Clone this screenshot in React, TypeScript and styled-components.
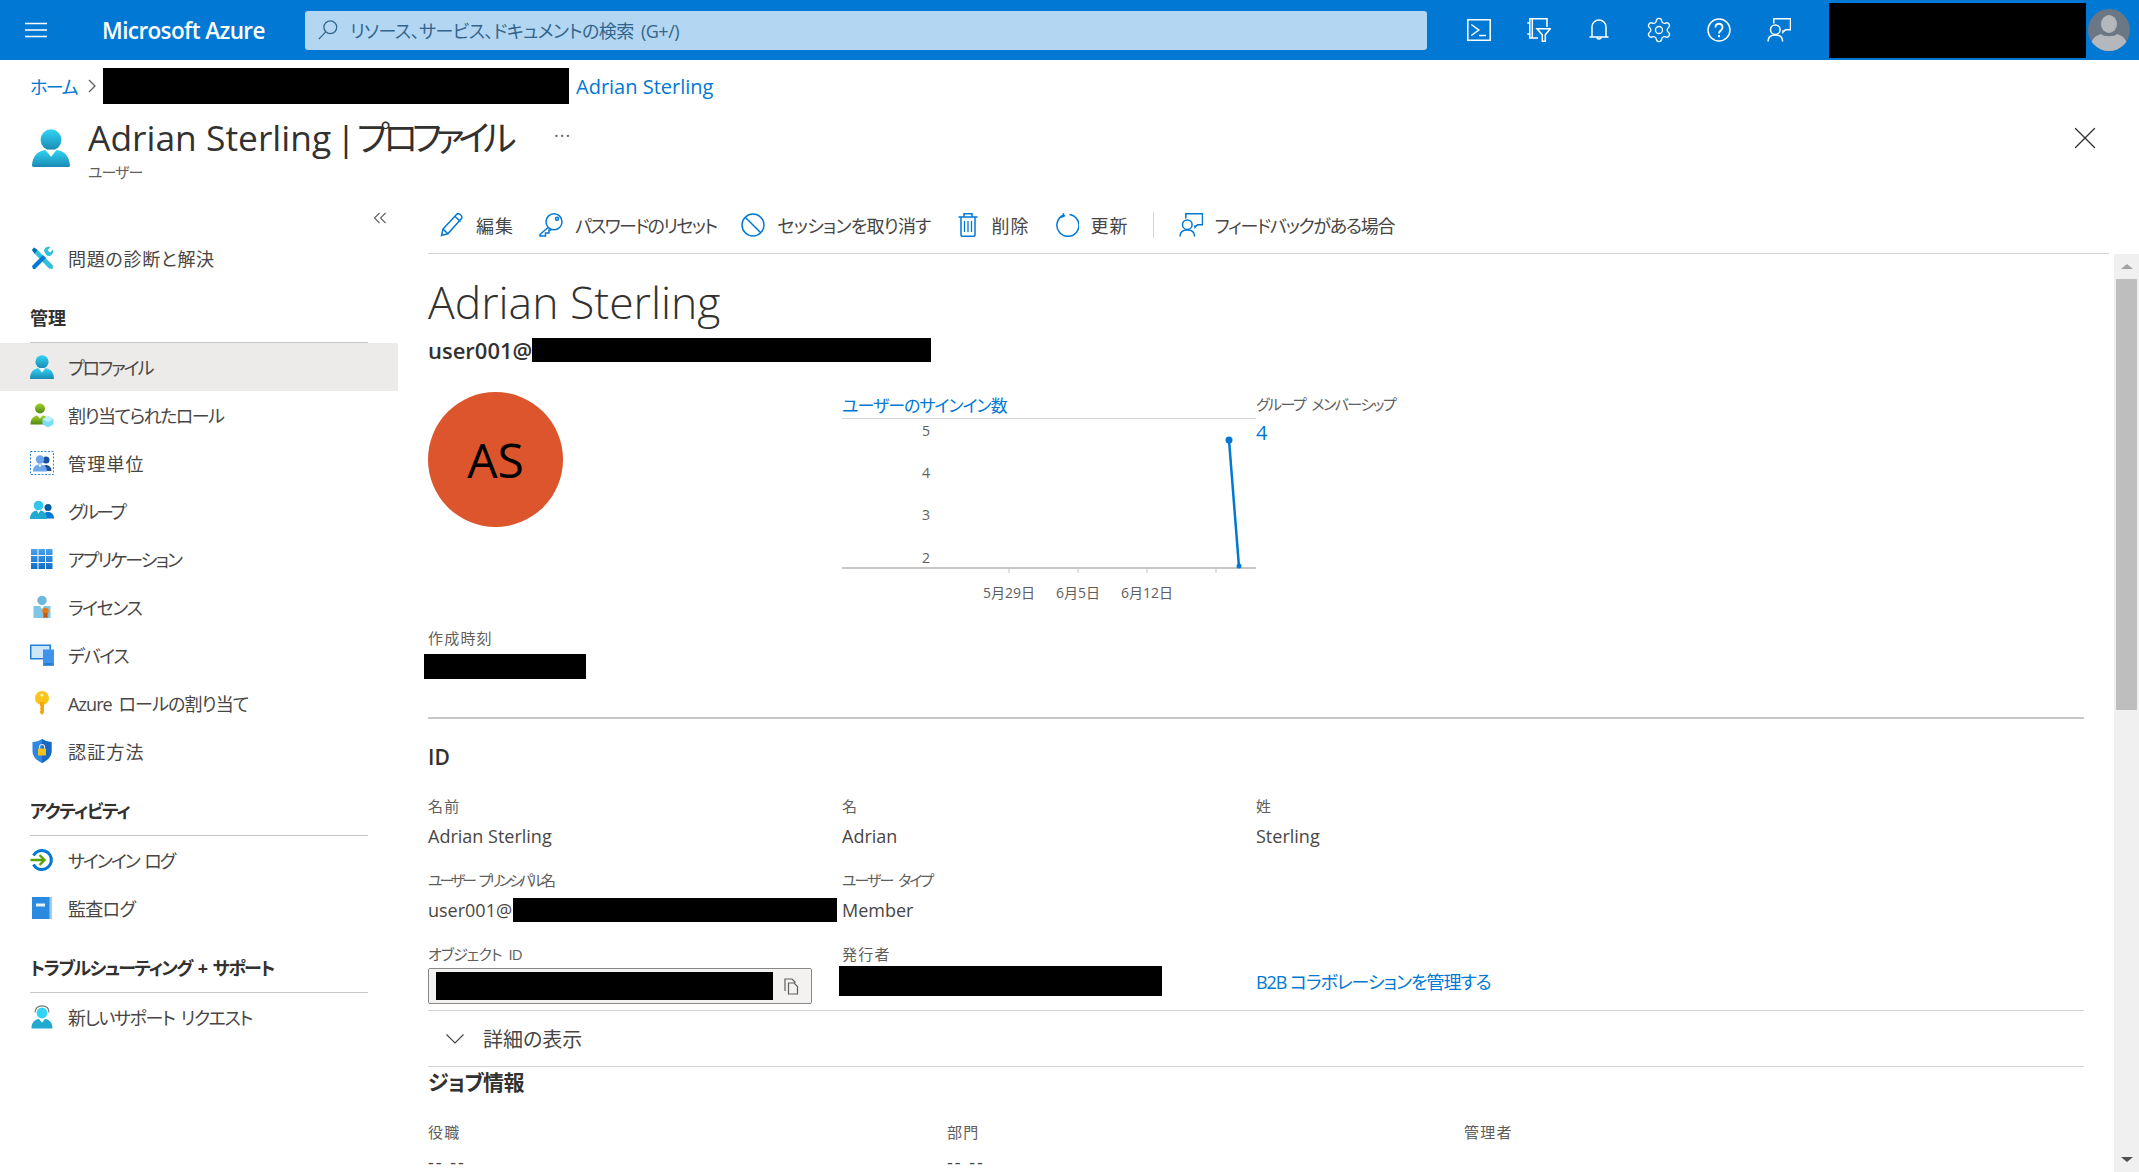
import { FC, ReactNode } from "react";
import styled, { createGlobalStyle } from "styled-components";
import { Settings, X } from "lucide-react";

const FONT = `"Open Sans", "Noto Sans CJK JP", sans-serif`;

const Global = createGlobalStyle`
  html, body { margin: 0; padding: 0; background: #fff; }
  body {
    font-family: ${FONT};
    font-feature-settings: "palt";
    color: #484644;
    font-size: 18px;
  }
  * { box-sizing: border-box; }
`;

const Page = styled.div`
  width: 2139px;
  height: 1172px;
  display: flex;
  flex-direction: column;
  overflow: hidden;
`;

// kana in the original font runs narrower than Noto, so labels carry their own tracking
const Txt = styled.span<{ $ls?: number }>`
  letter-spacing: ${(p) => p.$ls ?? 0}px;
  word-spacing: 3px;
  white-space: pre;
`;

const Redact = styled.div<{ $w: number; $h: number; $ml?: number; $mt?: number }>`
  flex: none;
  width: ${(p) => p.$w}px;
  height: ${(p) => p.$h}px;
  margin-left: ${(p) => p.$ml ?? 0}px;
  margin-top: ${(p) => p.$mt ?? 0}px;
  background: #000;
`;

/* top bar */
const TopBar = styled.header`
  flex: none;
  height: 60px;
  display: flex;
  align-items: center;
  padding-left: 25px;
  background: #0078d4;
  color: #fff;
`;

const Brand = styled.div`
  width: 162px;
  margin-left: 55px;
  margin-right: 1px;
  font-size: 22.5px;
  font-weight: 600;
  letter-spacing: -0.6px;
  white-space: nowrap;
`;

const Search = styled.div`
  width: 1122px;
  height: 39px;
  margin-left: 40px;
  display: flex;
  align-items: center;
  gap: 11px;
  padding-left: 12px;
  border-radius: 3px;
  background: #b3d7f2;
  color: #33658c;
  font-size: 18px;
`;

const BarIcons = styled.div`
  display: flex;
  margin-left: 22px;
  margin-right: 20px;
`;

const BarIcon = styled.div`
  width: 60px;
  height: 60px;
  display: flex;
  align-items: center;
  justify-content: center;
`;

const AvatarSlot = styled.div`
  margin-left: 2px;
  display: flex;
`;

/* breadcrumb + header */
const Crumbs = styled.nav`
  flex: none;
  height: 36px;
  margin-top: 8px;
  padding-left: 30px;
  display: flex;
  align-items: center;
  font-size: 18px;
  color: #0078d4;
`;

const CrumbArrow = styled.span`
  display: flex;
  margin: 0 4px 0 8px;
`;

const CrumbCurrent = styled.span`
  margin-left: 7px;
  font-size: 20px;
  white-space: nowrap;
`;

const HeaderRow = styled.div`
  flex: none;
  height: 91px;
  padding: 8px 35px 0 32px;
  display: flex;
  align-items: flex-start;
`;

const HeaderIcon = styled.div`
  width: 56px;
  padding-top: 17px;
  display: flex;
`;

const TitleBlock = styled.div`
  width: 466px;
`;

const Title = styled.h1`
  margin: 3px 0 0;
  font-size: 35.4px;
  line-height: 44px;
  font-weight: 400;
  color: #323130;
  white-space: nowrap;
`;

const TitleSep = styled.span`
  letter-spacing: -4px;
  white-space: pre;
`;

const Sub = styled.div`
  margin-top: 3px;
  font-size: 15px;
  line-height: 20px;
  letter-spacing: -1px;
  color: #605e5c;
`;

const Dots = styled.div`
  padding-top: 11px;
  font-size: 18px;
  line-height: 24px;
  color: #605e5c;
  letter-spacing: 1px;
`;

const CloseBox = styled.div`
  margin-left: auto;
  padding-top: 7px;
  display: flex;
  color: #323130;
`;

/* sidebar */
const Body = styled.div`
  flex: 1;
  min-height: 0;
  display: flex;
`;

const Sidebar = styled.aside`
  flex: none;
  width: 398px;
  display: flex;
  flex-direction: column;
`;

const CollapseRow = styled.div`
  height: 39px;
  padding: 16px 11px 0 0;
  display: flex;
  justify-content: flex-end;
  align-items: flex-start;
`;

const NavRow = styled.div<{ $active?: boolean }>`
  flex: none;
  height: 48px;
  padding-left: 30px;
  display: flex;
  align-items: center;
  gap: 14px;
  font-size: 18px;
  background: ${(p) => (p.$active ? "#edebe9" : "transparent")};
`;

const NavIcon = styled.span`
  width: 24px;
  height: 24px;
  display: flex;
`;

const NavHeading = styled.div`
  flex: none;
  height: 61px;
  width: 338px;
  margin-left: 30px;
  padding-bottom: 12px;
  display: flex;
  align-items: flex-end;
  font-size: 18px;
  line-height: 24px;
  font-weight: 700;
  color: #323130;
  border-bottom: 1px solid #c8c6c4;
`;

/* main column */
const Main = styled.main`
  flex: 1;
  min-width: 0;
  display: flex;
  flex-direction: column;
`;

const Toolbar = styled.div`
  flex: none;
  height: 59px;
  margin: 0 30px;
  padding: 1px 0 0 12px;
  display: flex;
  align-items: center;
  gap: 25px;
  border-bottom: 1px solid #d6d6d6;
`;

const ToolButton = styled.div<{ $gap?: number }>`
  display: flex;
  align-items: center;
  gap: ${(p) => p.$gap ?? 12}px;
  font-size: 18px;
  white-space: nowrap;
`;

const ToolDivider = styled.div`
  width: 1px;
  height: 26px;
  margin-left: -1px;
  background: #d6d6d6;
`;

const ContentRow = styled.div`
  flex: 1;
  min-height: 0;
  display: flex;
`;

const Scroll = styled.div`
  flex: 1;
  min-width: 0;
  overflow: hidden;
  padding: 21px 30px 0;
`;

const ScrollBar = styled.div`
  flex: none;
  width: 25px;
  display: flex;
  flex-direction: column;
  align-items: center;
  background: #f0f0f0;
`;

const ScrollBtn = styled.div<{ $down?: boolean }>`
  flex: none;
  height: 25px;
  width: 100%;
  display: flex;
  align-items: center;
  justify-content: center;
  margin-top: ${(p) => (p.$down ? "auto" : "0")};
  &::before {
    content: "";
    border-left: 6px solid transparent;
    border-right: 6px solid transparent;
    ${(p) =>
      p.$down
        ? "border-top: 5px solid #505050;"
        : "border-bottom: 5px solid #a3a3a3;"}
  }
`;

const ScrollThumb = styled.div`
  flex: none;
  width: 21px;
  height: 431px;
  background: #bebebe;
`;

const UserName = styled.h2`
  margin: -1px 0 1px;
  font-size: 44.5px;
  line-height: 56px;
  font-weight: 300;
  color: #323130;
  white-space: nowrap;
`;

const Upn = styled.div`
  margin-top: 8px;
  height: 24px;
  display: flex;
  align-items: center;
  font-size: 22px;
  font-weight: 600;
  color: #323130;
`;

const Summary = styled.div`
  margin-top: 30px;
  display: grid;
  grid-template-columns: 414px 414px 1fr;
`;

const Avatar = styled.div`
  width: 135px;
  height: 135px;
  border-radius: 50%;
  background: #dc552c;
  color: #000;
  display: flex;
  align-items: center;
  justify-content: center;
  font-size: 48px;
  font-weight: 500;
`;

const ChartTitle = styled.div`
  height: 27px;
  font-size: 17px;
  line-height: 28px;
  letter-spacing: -1px;
  color: #0078d4;
  border-bottom: 1px solid #d6d6d6;
`;

const ChartLabel = styled.text`
  font-family: ${FONT};
  font-size: 14px;
  fill: #605e5c;
`;

const FieldLabel = styled.div<{ $ls?: number }>`
  font-size: 15px;
  line-height: 24px;
  letter-spacing: ${(p) => p.$ls ?? 1.2}px;
  word-spacing: 4px;
  color: #605e5c;
  white-space: nowrap;
`;

const GroupCount = styled.div`
  margin-top: 5px;
  font-size: 20px;
  line-height: 24px;
  color: #0078d4;
`;

const Created = styled.div`
  margin-top: 16px;
`;

const SectionRule = styled.div`
  margin-top: 38px;
  height: 2px;
  background: #c8c6c4;
`;

const SectionTitle = styled.h3<{ $mt?: number; $ls?: number }>`
  margin: ${(p) => p.$mt ?? 0}px 0 0;
  font-size: 21px;
  line-height: 30px;
  font-weight: 600;
  letter-spacing: ${(p) => p.$ls ?? 0}px;
  color: #323130;
`;

const FieldGrid = styled.div`
  margin-top: 22px;
  display: grid;
  grid-template-columns: 414px 414px 1fr;
  grid-template-rows: 74px 74px 68px;
`;

const JobGrid = styled.div`
  margin-top: 23px;
  display: grid;
  grid-template-columns: 519px 517px 1fr;
`;

const Field = styled.div`
  min-width: 0;
`;

const FieldValue = styled.div<{ $ls?: number }>`
  margin-top: 6px;
  height: 24px;
  display: flex;
  align-items: center;
  font-size: 18px;
  line-height: 18px;
  letter-spacing: ${(p) => p.$ls ?? 0}px;
  white-space: nowrap;
`;

const CopyInput = styled.div`
  margin-top: 2px;
  width: 384px;
  height: 36px;
  padding-left: 7px;
  padding-right: 11px;
  display: flex;
  align-items: center;
  justify-content: space-between;
  background: #f3f2f1;
  border: 1px solid #8a8886;
  border-radius: 2px;
`;

const LinkText = styled.div`
  padding-top: 28px;
  font-size: 18px;
  line-height: 24px;
  letter-spacing: -1.05px;
  color: #0078d4;
  white-space: nowrap;
`;

const Expander = styled.div`
  height: 57px;
  padding-left: 18px;
  display: flex;
  align-items: center;
  gap: 19px;
  font-size: 20px;
  border-top: 1px solid #d6d6d6;
  border-bottom: 1px solid #d6d6d6;
`;

/* drawings */
const Person: FC<{ id: string; size?: number }> = ({ id, size = 24 }) => (
  <svg width={size} height={size} viewBox="0 0 24 24">
    <defs>
      <linearGradient id={id} x1="0" y1="0" x2="0" y2="1">
        <stop offset="0" stopColor="#32d4f5" />
        <stop offset="1" stopColor="#198ab3" />
      </linearGradient>
    </defs>
    <circle cx="12" cy="6.800" r="6.600" fill={`url(#${id})`} />
    <path
      d="M1 24c-.6 0-1-.5-1-1.100C.4 17 3.500 13.800 8.500 13.200L12 17.500l3.500-4.300c5 .6 8.100 3.800 8.500 9.700 0 .6-.4 1.100-1 1.100z"
      fill={`url(#${id})`}
    />
    <path d="M9.600 13h4.800L12 17.500z" fill="#fff" fillOpacity=".85" />
  </svg>
);

const WrenchIcon = () => (
  <svg width="24" height="24" viewBox="0 0 24 24">
    <path d="M4.500 7.500L2 4l2-2.500 3.500 2.500L23 19.500 22.500 23 19 22.500z" fill="#32bedd" />
    <path d="M2 4l2-2.500L7.500 4 4.500 7.500z" fill="#0a6cb5" />
    <path d="M2 20l11-11 3 3L5 23H3z" fill="#0078d4" />
    <path d="M14 5c0-2.500 3-5 6.500-4l-3 3 2.500 2.500 3-3c1 3.500-1.500 6.500-4 6.500-1 0-2-.2-2.500-.7z" fill="#32bedd" />
  </svg>
);

const RoleIcon = () => (
  <svg width="24" height="24" viewBox="0 0 24 24">
    <defs>
      <linearGradient id="role" x1="0" y1="0" x2="0" y2="1">
        <stop offset="0" stopColor="#a4d02c" />
        <stop offset="1" stopColor="#4f8a10" />
      </linearGradient>
    </defs>
    <circle cx="10" cy="5.500" r="5" fill="url(#role)" />
    <path d="M.5 21.500c0-5.500 3-8.500 7-9l2.500 3 2.500-3c4 .5 7 3.500 7 9z" fill="url(#role)" />
    <path d="M9 12.500h2L10 15.500z" fill="#fff" />
    <path d="M18 13l5.500 3v5.500L18 24.500l-5.500-3V16z" fill="#7fdcf5" />
    <path d="M18 13l5.500 3L18 19l-5.500-3z" fill="#bff0fb" />
  </svg>
);

const AdminUnitIcon = () => (
  <svg width="24" height="24" viewBox="0 0 24 24">
    <rect x=".5" y=".5" width="23" height="23" fill="none" stroke="#2f86d9" strokeDasharray="2 1.500" />
    <circle cx="16" cy="9" r="3.500" fill="#1b4f9c" />
    <path d="M12 20c0-4 1.500-6 4-6s5.500 2 5.500 6z" fill="#1b4f9c" />
    <circle cx="10" cy="8.500" r="4.200" fill="#6ea6ec" />
    <path d="M3 20.500c0-4.500 2.500-7 7-7s7 2.500 7 7z" fill="#6ea6ec" />
    <path d="M8.500 14h3L10 16.500z" fill="#fff" />
  </svg>
);

const GroupIcon = () => (
  <svg width="24" height="24" viewBox="0 0 24 24">
    <circle cx="18" cy="8.500" r="3.500" fill="#005ba1" />
    <path d="M12.500 19.500c0-4 2-6.500 5.500-6.500s6 2.500 6 6.500z" fill="#0078d4" />
    <circle cx="8.500" cy="6.500" r="4.800" fill="#32c5ee" />
    <path d="M0 20c0-5.500 3-8 6.500-8.500l2 3 2-3c3.500.5 6.500 3 6.500 8.500z" fill="#22a9d0" />
    <path d="M7 11.800h3l-1.500 2.800z" fill="#fff" />
  </svg>
);

const AppsIcon = () => (
  <svg width="24" height="24" viewBox="0 0 24 24">
    <defs>
      <linearGradient id="apps" x1="0" y1="0" x2="0" y2="1">
        <stop offset="0" stopColor="#4aa0ec" />
        <stop offset="1" stopColor="#0f6fc6" />
      </linearGradient>
    </defs>
    <path
      d="M1 2h6.500v6H1zM8.500 2H15v6H8.500zM16 2h6.500v6H16zM1 9h6.500v6H1zM8.500 9H15v6H8.500zM16 9h6.500v6H16zM1 16h6.500v6H1zM8.500 16H15v6H8.500zM16 16h6.500v6H16z"
      fill="url(#apps)"
    />
  </svg>
);

const LicenseIcon = () => (
  <svg width="24" height="24" viewBox="0 0 24 24">
    <circle cx="12" cy="5.500" r="4.700" fill="#6db9dc" />
    <path d="M3.500 11h17v12h-17z" fill="#7fc6e4" />
    <path d="M10 11h4l-2 3z" fill="#fff" />
    <circle cx="15.500" cy="16" r="3.200" fill="#e8770f" />
    <path d="M13.500 18h4v5.500l-2-1.500-2 1.500z" fill="#c9550a" />
  </svg>
);

const DeviceIcon = () => (
  <svg width="24" height="24" viewBox="0 0 24 24">
    <path d="M0 1.500h21v15H0z" fill="#1f7fd6" />
    <path d="M1.500 3h18v12h-18z" fill="#cfe6f8" />
    <path d="M13 6.500h11V23H13z" fill="#3f93ea" />
    <path d="M14.500 21h8" stroke="#1463ad" strokeWidth="1" />
  </svg>
);

const KeyIcon = () => (
  <svg width="24" height="24" viewBox="0 0 24 24">
    <circle cx="12" cy="7" r="7" fill="#fcc419" />
    <circle cx="12" cy="4" r="1.600" fill="#fff3c4" />
    <path d="M10 11h4v10.500L12 24l-2-2.500v-1.500l1-1-1-1v-1l1-1-1-1z" fill="#f2a60c" />
  </svg>
);

const ShieldIcon = () => (
  <svg width="24" height="24" viewBox="0 0 24 24">
    <path d="M12 0c3 2 6 3 9.500 3v9c0 5.500-4 9.500-9.500 12C6.500 21.500 2.500 17.500 2.500 12V3C6 3 9 2 12 0z" fill="#2f86e0" />
    <path d="M12 0c3 2 6 3 9.500 3v9c0 5.500-4 9.500-9.500 12z" fill="#1668c0" />
    <rect x="8" y="9.500" width="8" height="7" rx=".6" fill="#f2c21a" />
    <path d="M9.500 9.500V8a2.500 2.500 0 015 0v1.500" fill="none" stroke="#e5e5e5" strokeWidth="1.200" />
  </svg>
);

const SignInIcon = () => (
  <svg width="24" height="24" viewBox="0 0 24 24">
    <path d="M3.500 7.500A9.500 9.500 0 1112 21.500a9.500 9.500 0 01-8.500-5" fill="none" stroke="#0078d4" strokeWidth="3" />
    <path d="M.5 12h13M9.500 7l5 5-5 5" fill="none" stroke="#57a300" strokeWidth="2.400" />
  </svg>
);

const BookIcon = () => (
  <svg width="24" height="24" viewBox="0 0 24 24">
    <path d="M2 1h19.500a.5.5 0 01.5.5v21a.5.5 0 01-.5.5H2z" fill="#2a8ae0" />
    <path d="M19.500 1H21a1 1 0 011 1v20a1 1 0 01-1 1h-1.500z" fill="#9dcdf4" />
    <path d="M6 7.500h9v3H6z" fill="#e6f2fb" />
  </svg>
);

const SupportIcon = () => (
  <svg width="24" height="24" viewBox="0 0 24 24">
    <path d="M5 7.500C5 3 8 .8 12 .8s7 2.200 7 6.700" fill="none" stroke="#7a7a7a" strokeWidth="1.200" />
    <circle cx="12" cy="8" r="5.400" fill="#32d4f5" />
    <path d="M1.500 23.500c0-6 3-9 7.500-9.500l3 3.500 3-3.500c4.500.5 7.500 3.500 7.500 9.500z" fill="#22a9d0" />
    <path d="M10 14.200h4L12 17.500z" fill="#fff" />
  </svg>
);

const Stroke: FC<{ size?: number; color?: string; sw?: number; children: ReactNode; view?: number }> = ({
  size = 24,
  color = "#0078d4",
  sw = 1.5,
  children,
  view = 24,
}) => (
  <svg width={size} height={size} viewBox={`0 0 ${view} ${view}`} fill="none" stroke={color} strokeWidth={sw}>
    {children}
  </svg>
);

const Feedback: FC<{ color: string }> = ({ color }) => (
  <Stroke color={color}>
    <path d="M6.800 5.500V.8h16.700v11H18.500l-2.500 2.500v-2" />
    <circle cx="8.300" cy="11.700" r="4.800" />
    <path d="M1 23.500c0-4 2.500-6.500 7.300-6.500s7.300 2.500 7.300 6.500" />
  </Stroke>
);

const WHITE = "#fff";

const navManage: { label: string; ls: number; icon: ReactNode; active?: boolean }[] = [
  { label: "プロファイル", ls: -2, icon: <Person id="nav-profile" />, active: true },
  { label: "割り当てられたロール", ls: -1.5, icon: <RoleIcon /> },
  { label: "管理単位", ls: 1.2, icon: <AdminUnitIcon /> },
  { label: "グループ", ls: -2.5, icon: <GroupIcon /> },
  { label: "アプリケーション", ls: -1.9, icon: <AppsIcon /> },
  { label: "ライセンス", ls: -1.4, icon: <LicenseIcon /> },
  { label: "デバイス", ls: -1.3, icon: <DeviceIcon /> },
  { label: "Azure ロールの割り当て", ls: -0.9, icon: <KeyIcon /> },
  { label: "認証方法", ls: 1.2, icon: <ShieldIcon /> },
];

const Chart = () => (
  <svg width="414" height="186" viewBox="0 0 414 186">
    <ChartLabel x="84" y="17" textAnchor="middle">5</ChartLabel>
    <ChartLabel x="84" y="59" textAnchor="middle">4</ChartLabel>
    <ChartLabel x="84" y="101" textAnchor="middle">3</ChartLabel>
    <ChartLabel x="84" y="144" textAnchor="middle">2</ChartLabel>
    <path d="M0 149h414" stroke="#c8c6c4" strokeWidth="2" />
    <path d="M167 149v5M236 149v5M305 149v5M374 149v5" stroke="#c8c6c4" />
    <ChartLabel x="167" y="179" textAnchor="middle">5月29日</ChartLabel>
    <ChartLabel x="236" y="179" textAnchor="middle">6月5日</ChartLabel>
    <ChartLabel x="305" y="179" textAnchor="middle">6月12日</ChartLabel>
    <path d="M387 21L397 148" stroke="#0078d4" strokeWidth="2.500" />
    <circle cx="387" cy="21" r="3.500" fill="#0078d4" />
    <circle cx="397" cy="147" r="2.500" fill="#0078d4" />
  </svg>
);

const App: FC = () => {
  return (
    <Page>
      <Global />
      <TopBar>
        <svg width="22" height="16" viewBox="0 0 22 16" stroke="#fff" strokeWidth="1.600">
          <path d="M0 1.500h22M0 8h22M0 14.500h22" />
        </svg>
        <Brand>Microsoft Azure</Brand>
        <Search>
          <Stroke size={22} color="#33658c" sw={1.4}>
            <circle cx="14.500" cy="9" r="7" />
            <path d="M9.500 14L2 22" />
          </Stroke>
          <Txt $ls={-0.5}>リソース、サービス、ドキュメントの検索 (G+/)</Txt>
        </Search>
        <BarIcons>
          <BarIcon>
            <Stroke color={WHITE}>
              <path d="M.8 1.800h22.400v20.400H.8z" />
              <path d="M4.300 6.500l7.500 5.500-7.500 5.500M12 17.500h7" />
            </Stroke>
          </BarIcon>
          <BarIcon>
            <Stroke color={WHITE}>
              <path d="M9 .8h11V9M9 .8H2.800V20H11M5.300.8V20M.3 5h2.500M.3 16h2.500" />
              <path d="M10 10.700h13.300l-5 6v6.500h-3v-6.500z" />
            </Stroke>
          </BarIcon>
          <BarIcon>
            <Stroke color={WHITE}>
              <path d="M5 19V9a7 7 0 0114 0v10M2.500 19h19M10 19a2 2 0 004 0" />
            </Stroke>
          </BarIcon>
          <BarIcon>
            <Settings size={28} color="#fff" strokeWidth={1.100} />
          </BarIcon>
          <BarIcon>
            <Stroke color={WHITE}>
              <circle cx="12" cy="12" r="11" />
              <path d="M8.500 9.500c0-5 7-5 7 0 0 3-3.500 3-3.500 6" strokeWidth="1.800" />
              <path d="M12 17v2.300" strokeWidth="1.800" />
            </Stroke>
          </BarIcon>
          <BarIcon>
            <Feedback color="#fff" />
          </BarIcon>
        </BarIcons>
        <Redact $w={257} $h={55} />
        <AvatarSlot>
          <svg width="42" height="42" viewBox="0 0 42 42">
            <defs>
              <clipPath id="me">
                <circle cx="21" cy="21" r="21" />
              </clipPath>
            </defs>
            <circle cx="21" cy="21" r="21" fill="#6b7785" />
            <g clipPath="url(#me)" fill="#b4b8bc">
              <ellipse cx="21" cy="15" rx="8" ry="9" />
              <path d="M2 42c0-10 4-15 11-17 2 3 14 3 16 0 7 2 11 7 11 17z" />
            </g>
          </svg>
        </AvatarSlot>
      </TopBar>

      <Crumbs>
        <Txt $ls={-1.5}>ホーム</Txt>
        <CrumbArrow>
          <Stroke size={14} color="#605e5c" sw={1.300} view={14}>
            <path d="M4 1l6 6-6 6" />
          </Stroke>
        </CrumbArrow>
        <Redact $w={466} $h={36} />
        <CrumbCurrent>Adrian Sterling</CrumbCurrent>
      </Crumbs>

      <HeaderRow>
        <HeaderIcon>
          <Person id="head" size={38} />
        </HeaderIcon>
        <TitleBlock>
          <Title>
            Adrian Sterling
            <TitleSep> | </TitleSep>
            <Txt $ls={-6}>プロファイル</Txt>
          </Title>
          <Sub>ユーザー</Sub>
        </TitleBlock>
        <Dots>···</Dots>
        <CloseBox>
          <X size={38} strokeWidth={0.8} />
        </CloseBox>
      </HeaderRow>

      <Body>
        <Sidebar>
          <CollapseRow>
            <Stroke size={14} color="#605e5c" sw={1.100} view={14}>
              <path d="M6.500 2L1.500 7l5 5M12.500 2l-5 5 5 5" />
            </Stroke>
          </CollapseRow>
          <NavRow>
            <NavIcon><WrenchIcon /></NavIcon>
            <Txt $ls={0.7}>問題の診断と解決</Txt>
          </NavRow>
          <NavHeading>管理</NavHeading>
          {navManage.map((item) => (
            <NavRow key={item.label} $active={item.active}>
              <NavIcon>{item.icon}</NavIcon>
              <Txt $ls={item.ls}>{item.label}</Txt>
            </NavRow>
          ))}
          <NavHeading><Txt $ls={-1.3}>アクティビティ</Txt></NavHeading>
          <NavRow>
            <NavIcon><SignInIcon /></NavIcon>
            <Txt $ls={-2}>サインイン ログ</Txt>
          </NavRow>
          <NavRow>
            <NavIcon><BookIcon /></NavIcon>
            <Txt $ls={-0.7}>監査ログ</Txt>
          </NavRow>
          <NavHeading><Txt $ls={-1.55}>トラブルシューティング + サポート</Txt></NavHeading>
          <NavRow>
            <NavIcon><SupportIcon /></NavIcon>
            <Txt $ls={-1.4}>新しいサポート リクエスト</Txt>
          </NavRow>
        </Sidebar>

        <Main>
          <Toolbar>
            <ToolButton>
              <Stroke>
                <path d="M1.500 22.500l1.500-6.500L16.500 1.500c1-1 2.500-1 4 .3s1.800 3 .8 4L7.800 20.800z" />
                <path d="M3 16l4.800 4.800M15 3.500l5.500 5" />
              </Stroke>
              <Txt $ls={1}>編集</Txt>
            </ToolButton>
            <ToolButton>
              <Stroke>
                <circle cx="15" cy="8.800" r="8" />
                <circle cx="18" cy="5.800" r="1.500" />
                <path d="M9 14.500L1 21.500V23h5.500v-3H10v-3h2.500" />
              </Stroke>
              <Txt $ls={-1.7}>パスワードのリセット</Txt>
            </ToolButton>
            <ToolButton>
              <Stroke>
                <circle cx="12" cy="12" r="11" />
                <path d="M4.500 4.500l15 15" />
              </Stroke>
              <Txt $ls={-0.8}>セッションを取り消す</Txt>
            </ToolButton>
            <ToolButton>
              <Stroke>
                <path d="M2.500 4h19M8 4V.8h8V4M5 4v18c0 .8.500 1.300 1.300 1.300h11.400c.8 0 1.300-.5 1.300-1.300V4" />
                <path d="M8.500 8v11M12 8v11M15.500 8v11" strokeWidth="1.300" />
              </Stroke>
              <Txt $ls={1}>削除</Txt>
            </ToolButton>
            <ToolButton>
              <Stroke>
                <path d="M9 2A11 11 0 1014.500 1.400M8 .3L9.300 2.800 6.300 4.300" />
              </Stroke>
              <Txt $ls={1}>更新</Txt>
            </ToolButton>
            <ToolDivider />
            <ToolButton>
              <Feedback color="#0078d4" />
              <Txt $ls={-1.3}>フィードバックがある場合</Txt>
            </ToolButton>
          </Toolbar>

          <ContentRow>
            <Scroll>
              <UserName>Adrian Sterling</UserName>
              <Upn>
                user001@
                <Redact $w={399} $h={24} />
              </Upn>

              <Summary>
                <Avatar>AS</Avatar>
                <div>
                  <ChartTitle>ユーザーのサインイン数</ChartTitle>
                  <Chart />
                </div>
                <div>
                  <FieldLabel $ls={-1.55}>グループ メンバーシップ</FieldLabel>
                  <GroupCount>4</GroupCount>
                </div>
              </Summary>

              <Created>
                <FieldLabel>作成時刻</FieldLabel>
                <Redact $w={162} $h={25} $ml={-4} $mt={4} />
              </Created>

              <SectionRule />
              <SectionTitle $mt={23}>ID</SectionTitle>

              <FieldGrid>
                <Field>
                  <FieldLabel>名前</FieldLabel>
                  <FieldValue>Adrian Sterling</FieldValue>
                </Field>
                <Field>
                  <FieldLabel>名</FieldLabel>
                  <FieldValue>Adrian</FieldValue>
                </Field>
                <Field>
                  <FieldLabel>姓</FieldLabel>
                  <FieldValue>Sterling</FieldValue>
                </Field>
                <Field>
                  <FieldLabel $ls={-3.1}>ユーザー プリンシパル名</FieldLabel>
                  <FieldValue>
                    user001@
                    <Redact $w={324} $h={24} $ml={1} />
                  </FieldValue>
                </Field>
                <Field>
                  <FieldLabel $ls={-2}>ユーザー タイプ</FieldLabel>
                  <FieldValue>Member</FieldValue>
                </Field>
                <Field />
                <Field>
                  <FieldLabel $ls={-0.9}>オブジェクト ID</FieldLabel>
                  <CopyInput>
                    <Redact $w={337} $h={28} />
                    <Stroke size={18} color="#605e5c" sw={1.200} view={18}>
                      <path d="M3 14V2h7l3 3v1M6.500 17V6H12l3.500 3.500V17z" />
                    </Stroke>
                  </CopyInput>
                </Field>
                <Field>
                  <FieldLabel>発行者</FieldLabel>
                  <Redact $w={323} $h={30} $ml={-3} />
                </Field>
                <Field>
                  <LinkText>B2B コラボレーションを管理する</LinkText>
                </Field>
              </FieldGrid>

              <Expander>
                <svg width="18" height="10" viewBox="0 0 18 10" fill="none" stroke="#484644" strokeWidth="1.200">
                  <path d="M.5.500L9 9l8.500-8.500" />
                </svg>
                詳細の表示
              </Expander>

              <SectionTitle $ls={-0.6}>ジョブ情報</SectionTitle>
              <JobGrid>
                <Field>
                  <FieldLabel>役職</FieldLabel>
                  <FieldValue $ls={2}>-- --</FieldValue>
                </Field>
                <Field>
                  <FieldLabel>部門</FieldLabel>
                  <FieldValue $ls={2}>-- --</FieldValue>
                </Field>
                <Field>
                  <FieldLabel>管理者</FieldLabel>
                </Field>
              </JobGrid>
            </Scroll>
            <ScrollBar>
              <ScrollBtn />
              <ScrollThumb />
              <ScrollBtn $down />
            </ScrollBar>
          </ContentRow>
        </Main>
      </Body>
    </Page>
  );
};

export default App;
